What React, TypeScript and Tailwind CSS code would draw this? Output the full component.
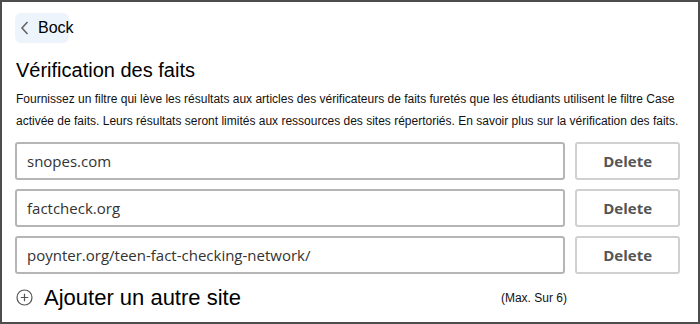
import React from "react";

const sites = ["snopes.com", "factcheck.org", "poynter.org/teen-fact-checking-network/"];

export default function App() {
  return (
    <div className="w-[700px] h-[324px] border-2 border-[#4d4d4d] bg-white overflow-hidden font-['Liberation_Sans',Arial,sans-serif] text-black">
      <div className="pl-[13px] pr-[18px] pt-[11px]">
        {/* Back */}
        <div className="relative w-[54px] h-[30px] rounded-md bg-[#eef4fb]">
          <div className="absolute left-[5px] top-0 h-full flex items-center gap-[9px] text-[16px] whitespace-nowrap">
            <svg width="9" height="14" viewBox="0 0 9 14" className="shrink-0">
              <path d="M7.5 1L2 7l5.5 6" fill="none" stroke="#666" strokeWidth="1.6" />
            </svg>
            <span>Bock</span>
          </div>
        </div>

        <h1 className="mt-[15px] text-[20px] leading-[24px] pl-[1px]">Vérification des faits</h1>

        <p className="mt-[6px] pl-[1px] text-[12px] leading-[22px] tracking-[0px] text-[#111]">
          Fournissez un filtre qui lève les résultats aux articles des vérificateurs de faits furetés que les étudiants utilisent le filtre Case activée de faits. Leurs résultats seront limités aux ressources des sites répertoriés. En savoir plus sur la vérification des faits.
        </p>

        {/* Site list */}
        <div className="mt-[10px] flex flex-col gap-[9px]">
          {sites.map((s) => (
            <div key={s} className="flex gap-[10px]">
              <div className="w-[552px] h-[38px] flex items-center px-[10px] border-2 border-[#b5b5b5] rounded-[3px] text-[15px] text-[#333] font-['Open_Sans',sans-serif]">
                {s}
              </div>
              <button className="w-[105px] h-[38px] border-2 border-[#d0d0d0] rounded-[3px] text-[15px] font-bold text-[#555] font-['Open_Sans',sans-serif]">
                Delete
              </button>
            </div>
          ))}
        </div>

        {/* Add */}
        <div className="mt-[7px] flex items-center">
          <svg width="17" height="17" viewBox="0 0 17 17" className="ml-[1px] shrink-0">
            <circle cx="8.5" cy="8.5" r="7.5" fill="none" stroke="#555" strokeWidth="1.2" />
            <path d="M8.5 4.8v7.4M4.8 8.5h7.4" stroke="#555" strokeWidth="1.2" />
          </svg>
          <span className="ml-[11px] text-[22px]">Ajouter un autre site</span>
          <span className="ml-[260px] text-[12px] text-[#111]">(Max. Sur 6)</span>
        </div>
      </div>
    </div>
  );
}
